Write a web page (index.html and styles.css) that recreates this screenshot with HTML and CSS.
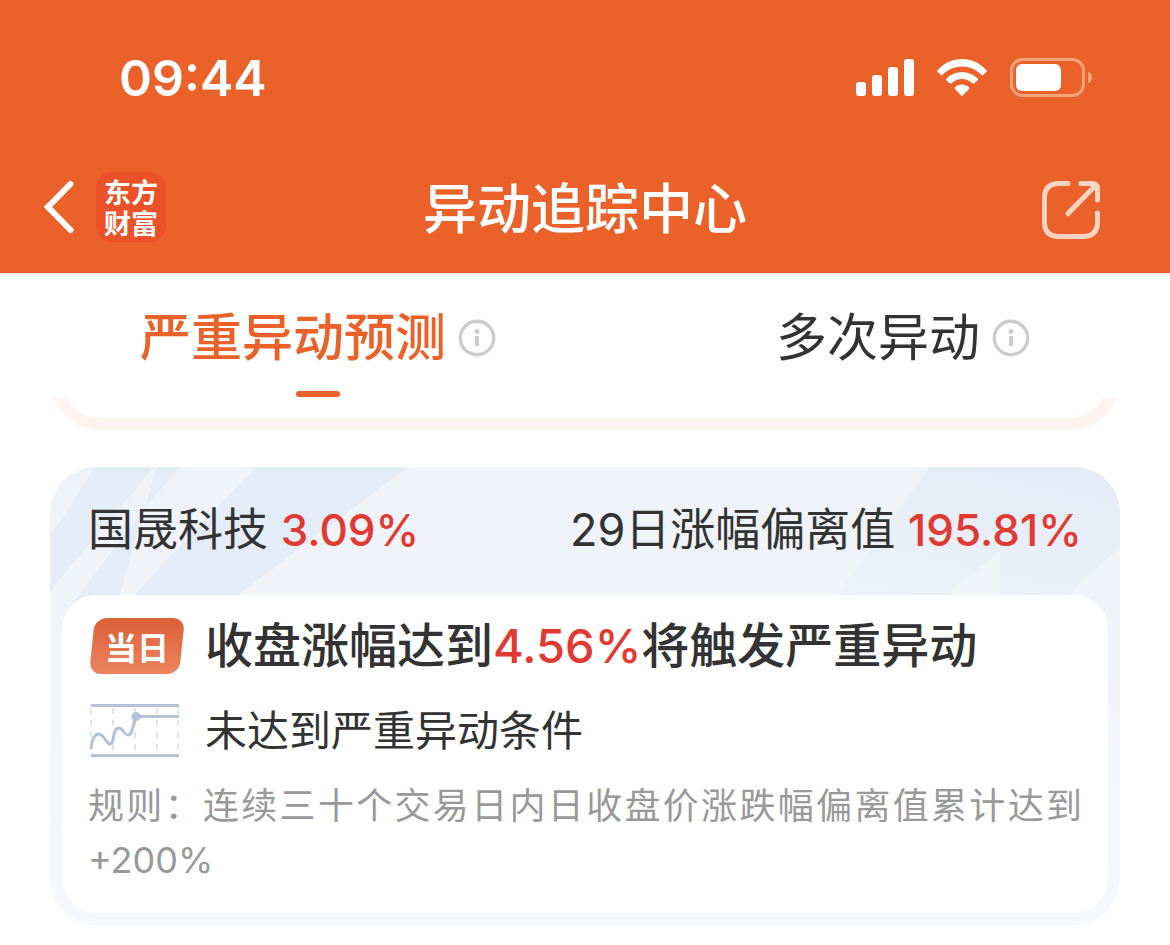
FILE: index.html
```
<!DOCTYPE html>
<html lang="zh-CN">
<head>
    <meta charset="UTF-8">
    <meta name="viewport" content="width=device-width, initial-scale=1.0">
    <title>异动追踪中心</title>
    <link rel="stylesheet" href="styles.css">
</head>
<body>
    <header class="header">
        <div class="status-bar">
            <span class="time">09:44</span>
            <div class="status-icons">
                <svg width="58" height="38" viewBox="0 0 58 38" fill="#fff">
                    <rect x="0" y="23" width="10" height="14" rx="3"/>
                    <rect x="16" y="16" width="10" height="21" rx="3"/>
                    <rect x="32" y="8" width="10" height="29" rx="3"/>
                    <rect x="48" y="0" width="10" height="37" rx="3"/>
                </svg>
                <svg width="50" height="38" viewBox="0 0 50 38" fill="#fff">
                    <path d="M0.6 11.2C14-3.6 36-3.6 49.4 11.2Q50.2 12 49.4 12.9L46 16Q45.2 16.6 44.4 15.8C33.5 4.7 16.5 4.7 5.6 15.8Q4.8 16.6 4 16L0.6 12.9Q-0.2 12 0.6 11.2Z"/>
                    <path d="M9.3 19.5C18 10.7 32 10.7 40.7 19.5Q41.5 20.4 40.7 21.2L37.2 24.4Q36.4 25 35.6 24.3C29.5 18.6 20.5 18.6 14.4 24.3Q13.6 25 12.8 24.4L9.3 21.2Q8.5 20.4 9.3 19.5Z"/>
                    <path d="M18 28.3C22 24.7 28 24.7 32 28.3Q32.8 29.2 32 30L25.7 36.5Q25 37.2 24.3 36.5L18 30Q17.2 29.2 18 28.3Z"/>
                </svg>
                <svg width="82" height="40" viewBox="0 0 82 40">
                    <rect x="1.5" y="1.5" width="72" height="36" rx="11" fill="none" stroke="#f3a37c" stroke-width="3"/>
                    <rect x="6" y="6" width="45" height="27" rx="6" fill="#fff"/>
                    <path d="M78 13.5Q82 15.5 82 19.5T78 25.5Z" fill="#f3a37c"/>
                </svg>
            </div>
        </div>
        <nav class="nav-bar">
            <div class="nav-left">
                <button class="icon-button" aria-label="返回">
                    <svg width="30" height="54" viewBox="0 0 30 54" fill="none" stroke="#fff" stroke-width="6" stroke-linecap="round">
                        <path d="M26.5 4L4 27L26.5 50"/>
                    </svg>
                </button>
                <a class="logo" href="#">东方<br>财富</a>
            </div>
            <h1 class="title">异动追踪中心</h1>
            <div class="nav-right">
                <button class="icon-button" aria-label="分享">
                    <svg width="58" height="60" viewBox="0 0 58 60" fill="none" stroke="#f9d4c3" stroke-width="5" stroke-linecap="round" stroke-linejoin="round">
                        <path d="M26 3.5H17Q2.5 3.500 2.5 18V42Q2.500 56.5 17 56.5H41Q55.500 56.500 55.5 42V33"/>
                        <path d="M39 3.5H50Q55.500 3.500 55.5 9V20"/>
                        <path d="M54 5L26 33.5"/>
                    </svg>
                </button>
            </div>
        </nav>
    </header>

    <div class="tabs">
        <div class="tab active">
            <button class="tab-label">严重异动预测</button>
            <button class="icon-button" aria-label="严重异动预测说明">
                <svg class="info-icon" viewBox="0 0 38 38">
                    <circle cx="19" cy="19" r="16.7" fill="none" stroke="#ccc" stroke-width="3.4"/>
                    <circle cx="19" cy="12.5" r="2.4" fill="#ccc"/>
                    <rect x="17" y="17" width="4" height="10" rx="1" fill="#ccc"/>
                </svg>
            </button>
        </div>
        <div class="tab">
            <button class="tab-label">多次异动</button>
            <button class="icon-button" aria-label="多次异动说明">
                <svg class="info-icon" viewBox="0 0 38 38">
                    <circle cx="19" cy="19" r="16.7" fill="none" stroke="#ccc" stroke-width="3.4"/>
                    <circle cx="19" cy="12.5" r="2.4" fill="#ccc"/>
                    <rect x="17" y="17" width="4" height="10" rx="1" fill="#ccc"/>
                </svg>
            </button>
        </div>
    </div>

    <main class="list">
        <!-- tail of the previous card, scrolled under the tabs -->
        <div class="scrolled">
            <div class="scrolled-card"></div>
        </div>

        <section class="card">
            <svg class="decor decor-left" width="360" height="140" viewBox="0 0 360 140" fill="#e4ecf7">
                <path d="M45 0H104L0 124V70Z"/>
                <path d="M107 0H130L95 40Z"/>
                <path d="M94 42L70 128L20 140Z"/>
                <path d="M206 0H358L188 128H84Z"/>
            </svg>
            <svg class="decor decor-right" width="290" height="128" viewBox="0 0 290 128">
                <defs>
                    <linearGradient id="beam" x1="0" y1="1" x2="0.5" y2="0">
                        <stop offset="0" stop-color="#eef1f8"/>
                        <stop offset="1" stop-color="#e5ecf7"/>
                    </linearGradient>
                </defs>
                <path fill="url(#beam)" d="M99 0H290V80L237 128H170V85L116 128H7Z"/>
            </svg>
            <div class="card-head">
                <div class="stock">国晟科技 <strong>3.09%</strong></div>
                <div class="stock">29日涨幅偏离值 <strong>195.81%</strong></div>
            </div>
            <div class="card-body">
                <div class="row">
                    <span class="badge">当日</span>
                    <h2 class="headline">收盘涨幅达到<em>4.56%</em>将触发严重异动</h2>
                </div>
                <div class="row">
                    <svg class="chart-icon" width="92" height="56" viewBox="0 0 92 56" fill="none" stroke="#b3c2d6" stroke-width="3">
                        <g stroke="#d9dee6" stroke-width="1.5" stroke-dasharray="6 6">
                            <path d="M3 5V52M25 5V52M47 5V52M69 5V52M90 5V52"/>
                        </g>
                        <path d="M3 2.5H91M3 52.5H91"/>
                        <path d="M48 13.5H91"/>
                        <path d="M3 46C4 36 7 31 11 31C16 31 18 41 22 41C27 41 24 25 31 25C35 25 36 32 40 32C45 32 45 20 48 13.5"/>
                        <circle cx="48" cy="13.5" r="4.5" fill="#b3c2d6" stroke="none"/>
                    </svg>
                    <p class="condition">未达到严重异动条件</p>
                </div>
                <p class="rule">规则：连续三十个交易日内日收盘价涨跌幅偏离值累计达到+200%</p>
            </div>
        </section>
    </main>
</body>
</html>
```
FILE: styles.css
```
* {
    box-sizing: border-box;
}
body {
    margin: 0;
    background: #fff;
    color: #333;
    font-family: Inter, "Noto Sans CJK SC", sans-serif;
}
h1, h2, p {
    margin: 0;
}
svg {
    display: block;
}
button {
    padding: 0;
    border: none;
    background: none;
    color: inherit;
    font: inherit;
    cursor: pointer;
}

/* header */
.header {
    background: #ea622a;
    color: #fff;
    padding-bottom: 15px;
}
.status-bar {
    display: flex;
    align-items: center;
    justify-content: space-between;
    height: 156px;
    padding: 0 78px 0 119px;
}
.time {
    font-size: 50px;
    font-weight: 600;
}
.status-icons {
    display: flex;
    align-items: center;
    gap: 23px;
}
.nav-bar {
    display: grid;
    grid-template-columns: 1fr auto 1fr;
    align-items: center;
    height: 102px;
}
.nav-left {
    display: flex;
    align-items: center;
    gap: 22px;
    padding-left: 44px;
}
.nav-right {
    display: flex;
    justify-content: flex-end;
    padding: 6px 70px 0 0;
}
.logo {
    width: 70px;
    height: 70px;
    padding: 4px 0;
    border-radius: 16px;
    background: #eb5228;
    color: #fff;
    font-family: "Noto Sans CJK SC", sans-serif;
    font-size: 27px;
    font-weight: 700;
    line-height: 31px;
    text-align: center;
    text-decoration: none;
}
.title {
    padding-bottom: 4px;
    font-size: 54px;
    font-weight: 500;
}

/* tabs */
.tabs {
    display: flex;
    justify-content: space-around;
    height: 125px;
}
.tab {
    position: relative;
    display: flex;
    align-items: center;
    gap: 12px;
    height: 130px;
}
.tab-label {
    padding-bottom: 8px;
    font-size: 51px;
}
.active .tab-label {
    color: #ea622a;
    font-weight: 500;
}
.active::after {
    content: "";
    position: absolute;
    bottom: 6px;
    left: 50%;
    width: 44px;
    height: 6px;
    margin-left: -22px;
    border-radius: 3px;
    background: #ea622a;
}
.info-icon {
    width: 38px;
    height: 38px;
}

/* cards */
.list {
    padding: 0 50px 20px;
}
.scrolled {
    display: flex;
    align-items: flex-end;
    height: 32px;
    margin-bottom: 37px;
    overflow: hidden;
}
.scrolled-card {
    flex: 1;
    height: 120px;
    border: 12px solid #fff3f2;
    border-radius: 50px;
}
.card {
    position: relative;
    padding: 0 12px 12px;
    border-radius: 46px;
    background: linear-gradient(#eff2f8, #f0f3f8 128px, #f6f8fb);
    overflow: hidden;
}
.decor {
    position: absolute;
    top: 0;
}
.decor-left {
    left: 0;
}
.decor-right {
    right: 0;
}
.card-head {
    position: relative;
    display: flex;
    align-items: center;
    justify-content: space-between;
    height: 128px;
    padding: 0 26px 10px;
}
.stock {
    font-size: 45px;
}
.stock strong {
    color: #e03a32;
    font-size: 44px;
    font-weight: 500;
}
.card-body {
    position: relative;
    padding: 22px 26px 26px;
    border-radius: 34px;
    background: #fff;
}
.row {
    display: grid;
    grid-template-columns: 98px 1fr;
    align-items: center;
    column-gap: 19px;
    height: 58px;
    margin-bottom: 27px;
}
.badge {
    position: relative;
    z-index: 0;
    width: 98px;
    color: #fff;
    font-family: "Noto Sans CJK SC", sans-serif;
    font-size: 32px;
    font-weight: 700;
    line-height: 56px;
    text-align: center;
}
.badge::before {
    content: "";
    position: absolute;
    inset: 0 4px;
    z-index: -1;
    border-radius: 12px;
    background: linear-gradient(#dc5f37, #ec8460);
    transform: skewX(-6deg);
}
.headline {
    font-size: 48px;
    font-weight: 500;
    line-height: 58px;
}
.headline em {
    color: #e03a32;
    font-size: 47px;
    font-style: normal;
}
.condition {
    font-size: 42px;
    line-height: 58px;
}
.rule {
    margin-top: -8px;
    color: #999;
    font-size: 36px;
    line-height: 54px;
    text-align: justify;
}
```
